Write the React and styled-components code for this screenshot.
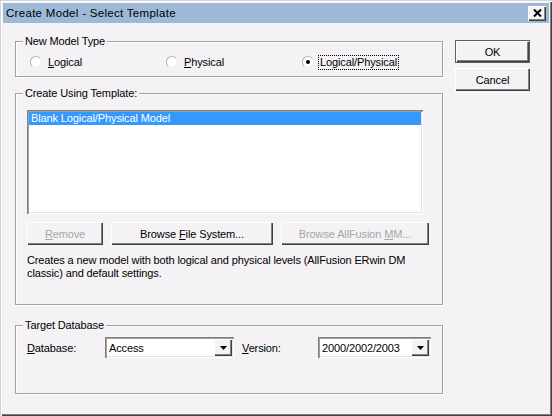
import React from "react";
import styled, { createGlobalStyle, css } from "styled-components";

const GlobalStyle = createGlobalStyle`
  body {
    margin: 0;
    background: #f5f2f5;
    font-family: "Liberation Sans", Arial, sans-serif;
    font-size: 11px;
    letter-spacing: -0.12px;
    color: #000;
  }
`;

const face = "#f5f2f5";

const raised = css`
  box-shadow: inset 1px 1px 0 #fff, inset -1px -1px 0 #404040,
    inset -2px -2px 0 #808080;
`;

const sunken = css`
  box-shadow: inset 1px 1px 0 #808080, inset 2px 2px 0 #a0a0a0,
    inset -1px -1px 0 #fff, inset -2px -2px 0 #e4e2e4;
`;

const Window = styled.div`
  width: 552px;
  height: 416px;
  box-sizing: border-box;
  padding: 3px;
  background: ${face};
  box-shadow: inset 1px 1px 0 #d4d0d4, inset 2px 2px 0 #fff,
    inset -1px -1px 0 #404040, inset -2px -2px 0 #808080;
  display: flex;
  flex-direction: column;
`;

const TitleBar = styled.div`
  height: 20px;
  background: #9db9d7;
  display: flex;
  align-items: center;
  justify-content: space-between;
  padding: 0 3px 0 3px;
`;

const Title = styled.span`
  font-size: 11.5px;
  letter-spacing: 0.3px;
  color: #000;
`;

const CloseButton = styled.div`
  width: 18px;
  height: 15px;
  background: ${face};
  ${raised};
  display: flex;
  align-items: center;
  justify-content: center;
`;

const Body = styled.div`
  display: flex;
  padding: 18px 0 0 12px;
  gap: 12px;
`;

const Main = styled.div`
  width: 428px;
  display: flex;
  flex-direction: column;
`;

const Side = styled.div`
  display: flex;
  flex-direction: column;
  gap: 5px;
  margin-top: -1px;
`;

const Group = styled.div`
  position: relative;
  box-sizing: border-box;
  border: 1px solid #a0a0a0;
  box-shadow: 1px 1px 0 #fff, inset 1px 1px 0 #fff;
  margin-top: ${(p) => p.$gap || 0}px;
  padding: ${(p) => p.$pad};
`;

const GroupLabel = styled.span`
  position: absolute;
  top: -7px;
  left: 7px;
  padding: 0 2px;
  line-height: 13px;
  background: ${face};
`;

const Key = styled.span`
  text-decoration: underline;
`;

const RadioRow = styled.div`
  display: grid;
  grid-template-columns: 136px 136px 136px;
  padding-left: 14px;
  height: 14px;
  align-items: center;
`;

const RadioItem = styled.div`
  display: flex;
  align-items: center;
  gap: 5px;
`;

const RadioCircle = styled.span`
  width: 12px;
  height: 12px;
  box-sizing: border-box;
  border-radius: 50%;
  background: #fff;
  border: 1px solid;
  border-color: #b0b0b0 #ececec #ececec #b0b0b0;
  display: flex;
  align-items: center;
  justify-content: center;
  &::after {
    content: "";
    width: 4px;
    height: 4px;
    border-radius: 50%;
    background: ${(p) => (p.$checked ? "#000" : "transparent")};
  }
`;

const RadioText = styled.span`
  line-height: 13px;
  padding: 0 1px;
  outline: ${(p) => (p.$focus ? "1px dotted #000" : "none")};
`;

const ListBox = styled.div`
  width: 396px;
  height: 104px;
  box-sizing: border-box;
  padding: 2px;
  background: #fff;
  ${sunken};
`;

const ListRow = styled.div`
  height: 13px;
  line-height: 13px;
  padding-left: 2px;
  background: ${(p) => (p.$selected ? "#3399ff" : "transparent")};
  color: ${(p) => (p.$selected ? "#fff" : "#000")};
`;

const ButtonRow = styled.div`
  display: flex;
  gap: 8px;
  margin-top: 8px;
`;

const Button = styled.div`
  width: ${(p) => p.$w || 75}px;
  height: 23px;
  box-sizing: border-box;
  display: flex;
  align-items: center;
  justify-content: center;
  background: ${face};
  color: ${(p) => (p.$disabled ? "#a6a6a6" : "#000")};
  ${raised};
  ${(p) =>
    p.$default &&
    css`
      border: 1px solid #606060;
    `}
`;

const Description = styled.p`
  margin: 9px 0 0 0;
  line-height: 13px;
`;

const FieldRow = styled.div`
  display: flex;
  align-items: center;
  height: 21px;
`;

const FieldLabel = styled.span`
  width: ${(p) => p.$w}px;
  margin-left: ${(p) => p.$ml || 0}px;
`;

const Combo = styled.div`
  width: ${(p) => p.$w}px;
  height: 21px;
  box-sizing: border-box;
  padding: 2px;
  background: #fff;
  ${sunken};
  display: flex;
  align-items: center;
  justify-content: space-between;
`;

const ComboText = styled.span`
  padding-left: 2px;
`;

const ComboButton = styled.div`
  width: 18px;
  height: 17px;
  background: ${face};
  ${raised};
  display: flex;
  align-items: center;
  justify-content: center;
`;

function Arrow() {
  return (
    <svg width="7" height="4" viewBox="0 0 7 4">
      <path d="M0 0h7L3.5 4z" fill="#000" />
    </svg>
  );
}

export default function App() {
  return (
    <>
      <GlobalStyle />
      <Window>
        <TitleBar>
          <Title>Create Model - Select Template</Title>
          <CloseButton>
            <svg width="9" height="8" viewBox="0 0 9 8">
              <path d="M1 0.5l7 7M8 0.5l-7 7" stroke="#000" strokeWidth="2" />
            </svg>
          </CloseButton>
        </TitleBar>
        <Body>
          <Main>
            <Group $pad="13px 0 7px 0">
              <GroupLabel>New Model Type</GroupLabel>
              <RadioRow>
                <RadioItem>
                  <RadioCircle />
                  <RadioText>
                    <Key>L</Key>ogical
                  </RadioText>
                </RadioItem>
                <RadioItem>
                  <RadioCircle />
                  <RadioText>
                    <Key>P</Key>hysical
                  </RadioText>
                </RadioItem>
                <RadioItem>
                  <RadioCircle $checked />
                  <RadioText $focus>
                    Lo<Key>g</Key>ical/Physical
                  </RadioText>
                </RadioItem>
              </RadioRow>
            </Group>

            <Group $gap={16} $pad="16px 0 24px 11px">
              <GroupLabel>Create Using Template:</GroupLabel>
              <ListBox>
                <ListRow $selected>Blank Logical/Physical Model</ListRow>
              </ListBox>
              <ButtonRow>
                <Button $w={76} $disabled>
                  <Key>R</Key>emove
                </Button>
                <Button $w={162}>
                  Browse&nbsp;<Key>F</Key>ile System...
                </Button>
                <Button $w={148} $disabled>
                  Browse AllFusion&nbsp;<Key>M</Key>M...
                </Button>
              </ButtonRow>
              <Description>
                Creates a new model with both logical and physical levels
                (AllFusion ERwin DM
                <br />
                classic) and default settings.
              </Description>
            </Group>

            <Group $gap={20} $pad="11px 0 35px 11px">
              <GroupLabel>Target Database</GroupLabel>
              <FieldRow>
                <FieldLabel $w={78}>
                  <Key>D</Key>atabase:
                </FieldLabel>
                <Combo $w={129}>
                  <ComboText>Access</ComboText>
                  <ComboButton>
                    <Arrow />
                  </ComboButton>
                </Combo>
                <FieldLabel $w={76} $ml={8}>
                  <Key>V</Key>ersion:
                </FieldLabel>
                <Combo $w={113}>
                  <ComboText>2000/2002/2003</ComboText>
                  <ComboButton>
                    <Arrow />
                  </ComboButton>
                </Combo>
              </FieldRow>
            </Group>
          </Main>
          <Side>
            <Button $default>OK</Button>
            <Button>Cancel</Button>
          </Side>
        </Body>
      </Window>
    </>
  );
}
